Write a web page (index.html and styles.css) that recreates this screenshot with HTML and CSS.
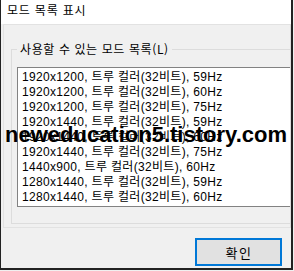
FILE: index.html
```html
<!DOCTYPE html>
<html lang="ko">
<head>
<meta charset="utf-8">
<link rel="stylesheet" href="styles.css">
</head>
<body>
<div class="window">
  <div class="titlebar">모드 목록 표시</div>
  <div class="panel">
    <fieldset class="group">
      <legend class="group-label">사용할 수 있는 모드 목록(L)</legend>
      <ul class="listbox">
        <li>1920x1200, 트루 컬러(32비트), 59Hz</li>
        <li>1920x1200, 트루 컬러(32비트), 60Hz</li>
        <li>1920x1200, 트루 컬러(32비트), 75Hz</li>
        <li>1920x1440, 트루 컬러(32비트), 59Hz</li>
        <li>1920x1440, 트루 컬러(32비트), 60Hz</li>
        <li>1920x1440, 트루 컬러(32비트), 75Hz</li>
        <li>1440x900, 트루 컬러(32비트), 60Hz</li>
        <li>1280x1440, 트루 컬러(32비트), 59Hz</li>
        <li>1280x1440, 트루 컬러(32비트), 60Hz</li>
      </ul>
    </fieldset>
  </div>
  <div class="actions"><button class="btn">확인</button></div>
  <div class="watermark">neweducation5.tistory.com</div>
</div>
</body>
</html>
```

FILE: styles.css
```css
html, body {
  margin: 0;
  padding: 0;
}
body {
  width: 294px;
  height: 271px;
  overflow: hidden;
  background: #f0f0f0;
  font-family: "Liberation Sans", "Noto Sans CJK KR", sans-serif;
  font-size: 12px;
  color: #000;
}
.window {
  position: relative;
  box-sizing: border-box;
  width: 293px;
  height: 270px;
  background: #f0f0f0;
  border-left: 1px solid #222;
  border-right: 2px solid #222;
  border-bottom: 2px solid #222;
}
.titlebar {
  height: 24px;
  box-sizing: border-box;
  background: #fff;
  padding-left: 6px;
  font-family: "Noto Sans CJK KR", sans-serif;
  font-size: 12px;
  line-height: 19px;
  letter-spacing: 0.8px;
}
.panel {
  margin-left: 2px;
  border: 1px solid #e2e2e2;
  border-right-color: #dcdcdc;
  padding: 16px 0 3px 7px;
  overflow: hidden;
}
.group {
  margin: 0;
  width: 400px;
  border: 1px solid #dcdcdc;
  padding: 10px 0 16px 5px;
}
.group-label {
  padding: 0 3px;
  font-family: "Noto Sans CJK KR", sans-serif;
  font-size: 12px;
  line-height: 16px;
  letter-spacing: 0.6px;
}
.listbox {
  list-style: none;
  margin: 0;
  box-sizing: border-box;
  height: 140px;
  border: 1px solid #828282;
  background: #fff;
  padding: 2px 4px;
}
.listbox li {
  line-height: 15px;
  white-space: nowrap;
  letter-spacing: 0.32px;
}
.actions {
  display: flex;
  justify-content: flex-end;
  padding: 10px 9px 0 0;
}
.btn {
  box-sizing: border-box;
  width: 87px;
  height: 28px;
  margin: 0;
  padding: 0 0 0 1px;
  border: 2px solid #0078d7;
  background: #e1e1e1;
  font-family: "Noto Sans CJK KR", sans-serif;
  font-size: 13px;
  letter-spacing: 1.5px;
  color: #000;
}
.watermark {
  position: absolute;
  left: 4px;
  top: 124px;
  font-family: "Liberation Sans", sans-serif;
  font-weight: bold;
  font-size: 22px;
  line-height: 22px;
  white-space: nowrap;
  color: #000;
}
```
